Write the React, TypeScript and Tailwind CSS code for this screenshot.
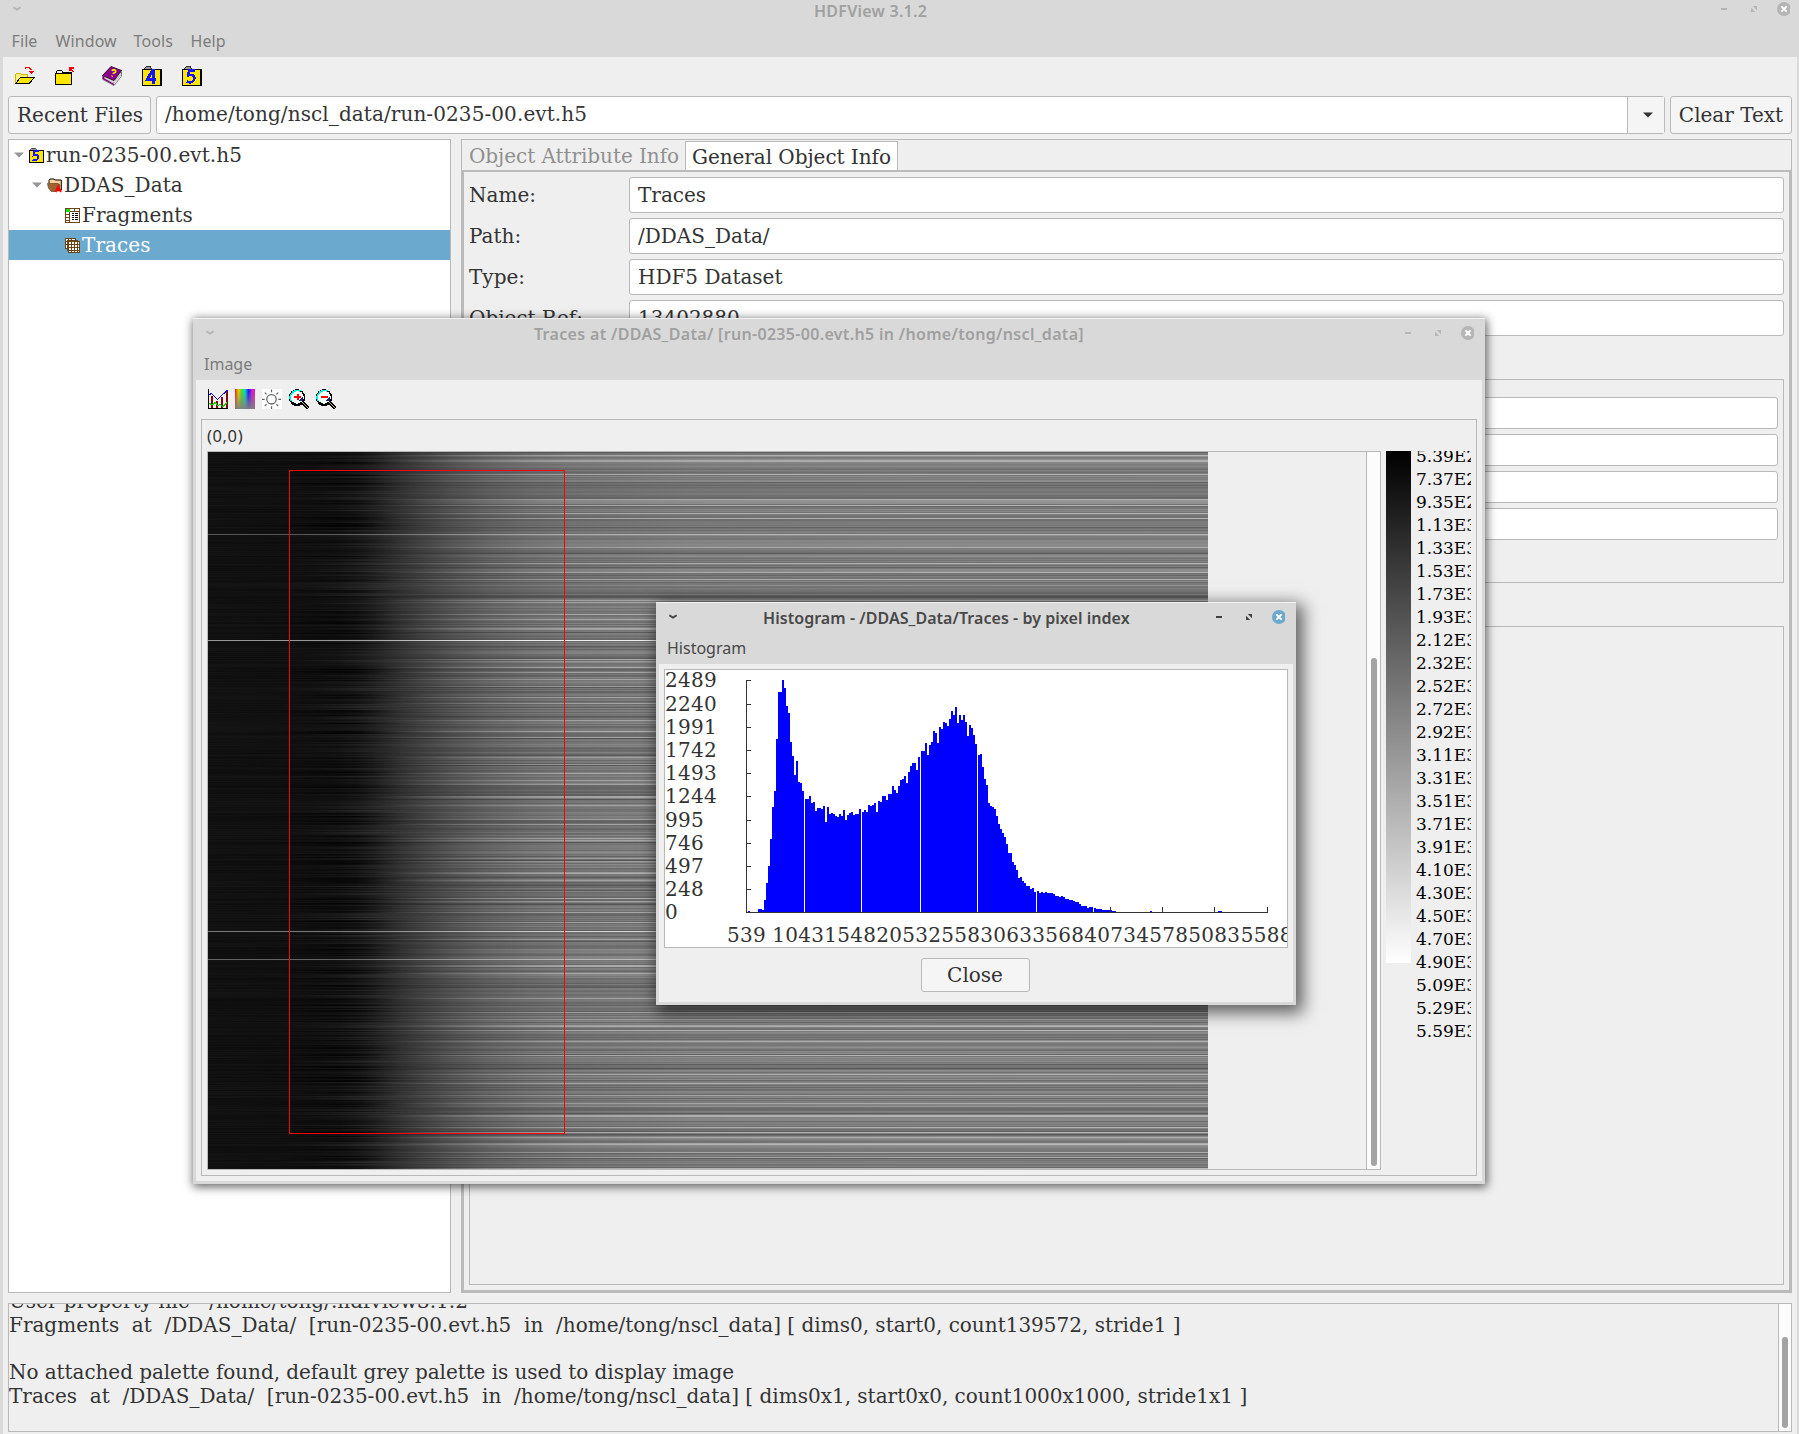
import React from "react";

/* ---------- shared pieces ---------- */

const SERIF = "font-['DejaVu_Serif',serif]";
const SANS = "font-['Noto_Sans',sans-serif]";

function Chevron({ color }: { color: string }) {
  return (
    <svg className="block" width="9" height="6" viewBox="0 0 9 6">
      <path d="M0.3 1.2 L4 3.6 L7.7 1.2" fill="none" stroke={color} strokeWidth="1.9" />
    </svg>
  );
}

function WindowButtons({ color, close }: { color: string; close: string }) {
  return (
    <svg className="block" width="70" height="14" viewBox="0 0 70 14">
      <rect x="1" y="6" width="6" height="2" fill={color} />
      <path d="M32.8 4 H37 V8.2 Z M31 5.8 V10 H35.2 Z" fill={color} />
      <circle cx="64" cy="7" r="7" fill={close} />
      <path d="M61.4 4.4 L66.6 9.6 M66.6 4.4 L61.4 9.6" stroke="#fff" strokeWidth="2" />
    </svg>
  );
}

function Field({ value, h }: { value?: string; h: string }) {
  return (
    <div className={`flex-1 ${h} rounded-[3px] border border-[#b9b9b9] bg-white pl-2 ${SERIF} text-[20px] leading-[35px] text-[#333]`}>
      {value}
    </div>
  );
}

/* ---------- icons ---------- */

function OpenIcon() {
  return (
    <svg width="20" height="20" viewBox="0 0 20 20" shapeRendering="crispEdges">
      <path d="M0.5 18 V8.5 L1.5 7.5 H5.5 L6.5 8.5 H12.5 V11" fill="#fff27a" stroke="#c9b400" />
      <path d="M0.5 17.5 L5.5 11.5 H19.5 L14 17.5 Z" fill="#ffe600" stroke="#000" />
      <path d="M10 2.5 C12 0.5 15 0.5 16.5 4.5" fill="none" stroke="#f00" strokeWidth="1.4" />
      <path d="M13.5 5 H20 L16.8 8 Z" fill="#f00" />
    </svg>
  );
}

function CloseFileIcon() {
  return (
    <svg width="20" height="20" viewBox="0 0 20 20" shapeRendering="crispEdges">
      <path d="M0.5 18.5 V7.5 H1.5 V5.5 L2.5 4.5 H6.5 L7.5 6.5 H16.5 V18.5 Z" fill="#ffe600" stroke="#000" />
      <rect x="2" y="5" width="5" height="2" fill="#efefef" />
      <path d="M1 7.5 H16" stroke="#000" />
      <path d="M14 1 H19 V2.5 H16 V5 H14 Z" fill="#f00" />
      <path d="M15 2 L18.5 5.8" stroke="#f00" strokeWidth="1.5" />
    </svg>
  );
}

function BookIcon() {
  return (
    <svg width="20" height="20" viewBox="0 0 20 20">
      <path d="M1 10 L1 13.5 L12 19.5 L19.5 10 V6 Z" fill="#fff" stroke="#444" strokeWidth="0.7" />
      <path d="M3 12.5 L12 17 L19 8.5 M3 11 L12 15.5 L19 7" stroke="#888" strokeWidth="0.6" fill="none" />
      <path d="M0.5 9.5 L9 0.5 L19.5 4.5 L12 14.5 Z" fill="#8a008a" stroke="#2c002c" strokeWidth="0.9" />
      <path d="M0.5 9.5 V13 L12 19.2 V17.8 L2.5 12.6 V11 Z" fill="#7a007a" />
      <path d="M9.8 4.8 C11 3 14.4 3.8 13.6 5.8 C13 7 11 6.6 11.2 8 M10.5 9.6 L9.7 10.4" fill="none" stroke="#ffee00" strokeWidth="1.7" />
    </svg>
  );
}

function HdfIcon({ digit, size }: { digit: "4" | "5"; size: number }) {
  return (
    <svg width={size} height={size} viewBox="0 0 20 20" shapeRendering="crispEdges">
      <path d="M1 4 L3.5 0.5 H8.5 L10.5 3 V4 Z" fill="#999" stroke="#000" strokeWidth="0.8" />
      <rect x="0.7" y="3.2" width="18.4" height="16.1" fill="#ffe600" stroke="#000" strokeWidth="1.4" />
      {digit === "4" ? (
        <path d="M13.8 13.4 H5.2 L10.6 4.2 H11.4 V17.6" fill="none" stroke="#1414ff" strokeWidth="2.8" />
      ) : (
        <path d="M13.2 4.6 H7.2 L6.2 9.4 C9.4 8.2 12.8 9.4 12.2 13 C11.6 16.4 8 17 4.8 15.6" fill="none" stroke="#1414ff" strokeWidth="2.7" />
      )}
    </svg>
  );
}

function GroupIcon() {
  return (
    <svg width="15" height="15" viewBox="0 0 15 15">
      <path d="M2 5 V2.5 L3 1 H7 L8 2 H14.3 V12 H5" fill="#ffcf9a" stroke="#000" strokeWidth="1" />
      <path d="M0.5 5.5 H11 L13 7 L12 11 L8 13.5 H4.5 L1.5 10 Z" fill="#9c6432" stroke="#6b3f17" strokeWidth="0.7" />
      <path d="M8.6 14 L11.2 8.4 L14 14 M9.8 12.2 H12.8" stroke="#f00" strokeWidth="1.9" fill="none" />
    </svg>
  );
}

function TableIcon() {
  return (
    <svg width="15" height="15" viewBox="0 0 15 15" shapeRendering="crispEdges">
      <rect x="0.5" y="0.5" width="14" height="14" fill="#fff" stroke="#6b4413" />
      <path d="M4.5 0 V15 M9.5 0 V4 M0 3.5 H15 M0 6.5 H5 M0 9.5 H5 M0 12.5 H5" stroke="#6b4413" />
      <rect x="1" y="1" width="4" height="3" fill="#1be01b" />
      <path d="M7 5.5 H9 M10 5.5 H13 M7 7.5 H9 M10 7.5 H13 M7 9.5 H9 M10 9.5 H13 M7 11.5 H9 M10 11.5 H13" stroke="#000" />
    </svg>
  );
}

function ArrayIcon() {
  return (
    <svg width="15" height="15" viewBox="0 0 15 15" shapeRendering="crispEdges">
      <rect x="0.5" y="0.5" width="10" height="10" fill="#fff" stroke="#6b4413" />
      <rect x="2.5" y="2.5" width="10" height="10" fill="#fff" stroke="#6b4413" />
      <path d="M0 3.5 H3 M0 6.5 H3 M3.5 0 V3 M6.5 0 V3" stroke="#6b4413" />
      <rect x="3.5" y="3.5" width="11" height="11" fill="#fff" stroke="#6b4413" />
      <path d="M6.5 4 V15 M9.5 4 V15 M12.5 4 V15 M4 6.5 H15 M4 9.5 H15 M4 12.5 H15" stroke="#6b4413" />
    </svg>
  );
}

function ChartIcon() {
  return (
    <svg width="20" height="20" viewBox="0 0 20 20" shapeRendering="crispEdges">
      <path d="M4 7 V19 M9 12 V19 M14 8 V19 M19 2 V19" stroke="#8b0000" strokeWidth="2" />
      <path d="M0.5 0 V19.5 H20" stroke="#000" fill="none" />
      <path d="M1 6 L3.5 4.5 L9.5 10.5 L19.5 1" stroke="#1010e0" fill="none" />
      <path d="M1 14 L4 16 L7 13.5 L10 17 L12 15 L15 18 L19 13" stroke="#00e000" fill="none" strokeWidth="1.2" />
    </svg>
  );
}

function PaletteIcon() {
  return (
    <svg width="20" height="20" viewBox="0 0 20 20">
      <defs>
        <linearGradient id="hue">
          <stop offset="0" stopColor="#e02020" />
          <stop offset="0.17" stopColor="#f0c800" />
          <stop offset="0.34" stopColor="#40e020" />
          <stop offset="0.5" stopColor="#10d8c8" />
          <stop offset="0.68" stopColor="#1818f0" />
          <stop offset="0.86" stopColor="#d818e0" />
          <stop offset="1" stopColor="#f02080" />
        </linearGradient>
        <linearGradient id="fade" x2="0" y2="1">
          <stop offset="0.1" stopColor="#808080" stopOpacity="0" />
          <stop offset="1" stopColor="#808080" stopOpacity="0.95" />
        </linearGradient>
      </defs>
      <rect width="20" height="20" fill="url(#hue)" />
      <rect width="20" height="20" fill="url(#fade)" />
    </svg>
  );
}

function BrightnessIcon() {
  return (
    <svg width="20" height="20" viewBox="0 0 20 20">
      <rect width="20" height="20" fill="#fdfdfd" />
      <circle cx="9.5" cy="10.3" r="4.7" fill="#fff" stroke="#666" strokeWidth="1.3" />
      <path d="M9.5 0.5 V3.2 M9.5 17.3 V20 M0 10.3 H2.7 M16.3 10.3 H19 M2.8 3.6 L4.6 5.4 M16.2 3.6 L14.4 5.4 M2.8 17 L4.6 15.2 M16.2 17 L14.4 15.2" stroke="#666" strokeWidth="1.2" />
    </svg>
  );
}

function ZoomIcon({ plus }: { plus?: boolean }) {
  return (
    <svg width="20" height="20" viewBox="0 0 20 20" shapeRendering="crispEdges">
      <circle cx="8" cy="8.3" r="7.5" fill="#f4ffff" stroke="#000" strokeWidth="1.4" />
      <path d="M2 12 A7 7 0 0 1 4 3.2 A7 7 0 0 1 11.5 2.2" fill="none" stroke="#00f0f0" strokeWidth="1.7" />
      <path d="M2.4 13.2 C5.5 16.8 10 16.4 13 14" fill="none" stroke="#000" strokeWidth="2.4" />
      <path d="M10.5 11.5 L13.5 8 V12 Z" fill="#20206a" />
      <path d="M13.5 13.5 L19.3 19.3" stroke="#000" strokeWidth="3.2" />
      <path d="M13.5 13.5 L19 19" stroke="#b8b070" strokeWidth="1.4" />
      <path d={plus ? "M5 8 H12 M8.5 4.8 V11.2" : "M5 8 H12"} stroke="#f00" strokeWidth="2" />
    </svg>
  );
}

/* ---------- image data ---------- */

const BRIGHT = [
  3, 8, 9, 22, 47, 53, 61, 66, 82, 95, 111, 120, 127, 148, 150, 162, 167, 176, 177, 207, 209, 215, 220, 227, 234, 245, 251,
  268, 279, 285, 305, 312, 321, 328, 332, 344, 345, 353, 367, 372, 386, 388, 406, 409, 420, 421, 428, 446, 449, 460, 470,
  487, 513, 514, 521, 546, 560, 567, 573, 574, 578, 589, 603, 622, 631, 643, 651, 663, 664, 675, 680, 685, 691, 692, 700,
  705, 716,
];
const DARK = [
  0, 30, 33, 75, 101, 143, 144, 145, 180, 206, 235, 264, 286, 303, 313, 347, 390, 408, 425, 433, 438, 452, 489, 535, 602,
  612, 616, 661, 682, 706,
];
const FULL: Record<number, [number, number]> = { 82: [88, 52], 188: [150, 105], 479: [120, 60], 507: [100, 38] };

function noise(n: number) {
  const s = Math.sin(n * 127.1 + 11.7) * 43758.5453;
  return s - Math.floor(s);
}

const STOPS: [number, number, number, number][] = [
  // x, base level, amplitude share, onset share
  [0, 17, 0, 0],
  [70, 16, 0, 0.1],
  [105, 16, 0, 0.45],
  [130, 18, 0, 0.8],
  [150, 24, 0.02, 1],
  [165, 32, 0.06, 0.85],
  [180, 42, 0.12, 0.55],
  [195, 52, 0.22, 0.3],
  [215, 64, 0.35, 0.12],
  [245, 80, 0.55, 0],
  [280, 95, 0.7, 0],
  [320, 106, 0.85, 0],
  [365, 114, 0.95, 0],
  [480, 121, 1, 0],
  [700, 124, 1.05, 0],
  [1000, 124, 1.1, 0],
];

const ROWS = Array.from({ length: 717 }, (_, y) => {
  let amp = (noise(y) - 0.5) * 34 + (noise(Math.floor(y / 4) + 900) - 0.5) * 18;
  if (BRIGHT.includes(y)) amp = 42 + noise(y + 31) * 16;
  if (DARK.includes(y)) amp = -24 - noise(y + 31) * 10;
  const onset = (noise(y + 5000) - 0.6) * 22 + (noise(Math.floor(y / 6) + 70) - 0.5) * 16;
  const left = (noise(y + 8000) - 0.5) * 7;
  const full = FULL[y];
  return STOPS.map(([x, base, a, o]) => {
    let v = base + a * amp + o * onset + (1 - Math.min(1, a)) * left;
    if (full) v = full[0] + (base - 16) * (a > 0 ? 0.75 : 0.5) + a * full[1] * 0.3;
    v = Math.max(4, Math.min(240, Math.round(v)));
    return { x, c: `rgb(${v},${v},${v})` };
  });
});

function Heatmap() {
  return (
    <svg className="block" width="1000" height="717" viewBox="0 0 1000 717" shapeRendering="crispEdges">
      <defs>
        {ROWS.map((stops, y) => (
          <linearGradient key={y} id={`row${y}`}>
            {stops.map((s) => (
              <stop key={s.x} offset={s.x / 1000} stopColor={s.c} />
            ))}
          </linearGradient>
        ))}
      </defs>
      {ROWS.map((_, y) => (
        <rect key={y} y={y} width="1000" height="1" fill={`url(#row${y})`} />
      ))}
      <rect x="81.5" y="18.5" width="275" height="663" fill="none" stroke="#f00" />
    </svg>
  );
}

/* ---------- histogram data: top edge of each 2px bar, in thirds of a pixel ---------- */

const SEGMENTS: [number, number[]][] = [
  [748, [948, 951, 951, 951, 951, 942, 942, 945, 915, 864, 813, 732, 636, 588, 432, 291, 291, 255, 279, 333, 354, 441, 483, 540, 498, 561, 564, 588]],
  [805, [612, 612, 603, 624, 621, 648, 639, 639, 642, 633, 681, 636, 657, 654, 657, 663, 666, 657, 663, 645, 675, 660, 654, 651, 660, 657, 657, 642]],
  [862, [651, 645, 651, 630, 633, 630, 624, 651, 618, 621, 603, 603, 615, 597, 597, 573, 585, 594, 573, 555, 552, 543, 564, 531, 513, 504, 504, 525, 486]],
  [921, [468, 468, 444, 480, 450, 441, 408, 414, 444, 396, 402, 381, 384, 393, 372, 348, 360, 336, 384, 360, 375, 360, 381, 423, 390, 399, 420, 447]],
  [978, [480, 477, 516, 552, 570, 624, 633, 636, 642, 663, 687, 702, 714, 726, 747, 774, 774, 801, 810, 825, 849, 846, 858, 864, 873, 873, 882, 879, 891]],
  [1037, [888, 894, 891, 894, 891, 894, 894, 894, 897, 903, 903, 906, 903, 906, 912, 912, 915, 915, 918, 921, 921, 927, 933, 933, 933, 939, 936, 936]],
  [1094, [939, 942, 942, 942, 945, 945, 945, 945, 945, 948, 948]],
  [1150, [948]],
  [1218, [948, 948]],
];
const Y_TICKS: [number, string][] = [
  [680, "2489"], [704, "2240"], [727, "1991"], [750, "1742"], [773, "1493"], [796, "1244"],
  [820, "995"], [843, "746"], [866, "497"], [889, "248"], [912, "0"],
];
const X_LABELS: [number, string][] = [
  [727, "539"], [772.3, "1043"], [824.3, "1548"], [876.3, "2053"], [928.3, "2558"], [980.3, "3063"],
  [1032.3, "3568"], [1084.3, "4073"], [1136.3, "4578"], [1188.3, "5083"], [1240.7, "5588"],
];

function Histogram() {
  return (
    <svg className="block" width="622" height="277" viewBox="665 670 622 277">
      <g shapeRendering="crispEdges" fill="#0000ff">
        {SEGMENTS.map(([x0, tops]) =>
          tops.map((t, i) => (
            <rect key={`${x0}-${i}`} x={x0 + i * 2} y={595 + t / 3} width="2" height={317 - t / 3} />
          )),
        )}
      </g>
      <g shapeRendering="crispEdges" fill="#333">
        <rect x="746" y="680" width="1" height="233" />
        <rect x="746" y="912" width="522" height="1" />
        {Y_TICKS.map(([y]) => (
          <rect key={y} x="746" y={y} width="5" height="1" />
        ))}
        {[1110, 1162, 1214, 1267].map((x) => (
          <rect key={x} x={x} y="907" width="1" height="5" />
        ))}
      </g>
      <g className={`${SERIF} text-[20px] tracking-[0.28px]`} fill="#333">
        {Y_TICKS.map(([y, label]) => (
          <text key={label} x="665" y={y + 7}>{label}</text>
        ))}
        {X_LABELS.map(([x, label]) => (
          <text key={label} x={x} y="942">{label}</text>
        ))}
      </g>
    </svg>
  );
}

const SCALE = [
  "5.39E2", "7.37E2", "9.35E2", "1.13E3", "1.33E3", "1.53E3", "1.73E3", "1.93E3", "2.12E3", "2.32E3", "2.52E3", "2.72E3",
  "2.92E3", "3.11E3", "3.31E3", "3.51E3", "3.71E3", "3.91E3", "4.10E3", "4.30E3", "4.50E3", "4.70E3", "4.90E3", "5.09E3",
  "5.29E3", "5.59E3",
];

/* ---------- windows ---------- */

function HistogramWindow() {
  return (
    <div className="absolute left-[656px] top-[602px] flex h-[403px] w-[640px] flex-col border-t border-[#f2f2f2] bg-[#d9d9d9] px-[3px] pb-[3px] shadow-[4px_5px_16px_3px_rgba(0,0,0,0.6)]">
      <div className={`flex h-[61px] flex-col ${SANS} text-[16px] text-[#484848]`}>
        <div className="flex h-[27px] items-center">
          <div className="w-[104px] pl-[10px]"><Chevron color="#484848" /></div>
          <div className="h-[27px] flex-1 whitespace-nowrap font-semibold leading-[30px] tracking-[0.05px]">Histogram - /DDAS_Data/Traces - by pixel index</div>
          <div className="pr-[8px]"><WindowButtons color="#3f3f3f" close="#6ca9cf" /></div>
        </div>
        <div className="pl-2 leading-[36px]">Histogram</div>
      </div>
      <div className="flex flex-1 flex-col items-center bg-[#efefef] pt-[5px]">
        <div className="h-[279px] w-[624px] border border-[#b9b9b9] bg-white"><Histogram /></div>
        <button className={`mr-[2px] mt-[10px] h-[34px] w-[109px] rounded-[3px] border border-[#b9b9b9] bg-[#f5f5f5] ${SERIF} text-[20px] leading-[32px] text-[#333]`}>Close</button>
      </div>
    </div>
  );
}

function TracesWindow() {
  return (
    <div className="absolute left-[193px] top-[318px] flex h-[866px] w-[1292px] flex-col border-t border-[#f2f2f2] bg-[#d9d9d9] px-[3px] pb-[3px] shadow-[1px_2px_9px_1px_rgba(0,0,0,0.6)]">
      <div className={`flex h-[61px] flex-col ${SANS} text-[16px] text-[#7c7c7c]`}>
        <div className="flex h-[27px] items-center">
          <div className="w-[338px] pl-[10px]"><Chevron color="#b5b5b5" /></div>
          <div className="h-[27px] flex-1 whitespace-nowrap font-semibold leading-[30px] tracking-[0.32px] text-[#a0a0a0]">Traces at /DDAS_Data/ [run-0235-00.evt.h5 in /home/tong/nscl_data]</div>
          <div className="pr-[8px]"><WindowButtons color="#b5b5b5" close="#b5b5b5" /></div>
        </div>
        <div className="pl-2 leading-[36px]">Image</div>
      </div>
      <div className="flex flex-1 flex-col bg-[#efefef] px-[5px] pb-[5px]">
        <div className="flex h-[39px] gap-[7px] pl-[7px] pt-[9px]">
          <ChartIcon />
          <PaletteIcon />
          <BrightnessIcon />
          <ZoomIcon plus />
          <ZoomIcon />
        </div>
        <div className="flex flex-1 flex-col border border-[#b9b9b9] px-[5px] pb-[5px]">
          <div className={`h-[31px] ${SANS} text-[16.5px] leading-[32px] tracking-[0.6px] text-[#333]`}>(0,0)</div>
          <div className="flex flex-1">
            <div className="flex h-[719px] w-[1174px] border border-[#b9b9b9]">
              <Heatmap />
              <div className="flex-1" />
              <div className="flex w-[14px] items-end border-l border-[#b9b9b9] bg-[#fcfcfc] pb-[3px] pl-[4px]">
                <div className="h-[508px] w-[6px] rounded-full bg-[#a3a3a3]" />
              </div>
            </div>
            <div className="ml-[5px] h-[512px] w-[25px] bg-[linear-gradient(to_bottom,#000,#fff)]" />
            <div className={`ml-[5px] h-[719px] w-[55px] overflow-hidden whitespace-nowrap ${SERIF} text-[17px] text-black`}>
              {SCALE.map((s, i) => (
                <div key={s} className={`h-[23px] leading-[23px] ${i === 0 ? "-mt-[6px]" : ""}`}>{s}</div>
              ))}
            </div>
          </div>
        </div>
      </div>
    </div>
  );
}

function TreeRow({ pad, icon, label, open, selected }: { pad: string; icon: React.ReactNode; label: string; open?: boolean; selected?: boolean }) {
  return (
    <div className={`flex h-[30px] items-center ${pad} ${selected ? "bg-[#6ca9cf] text-white" : ""}`}>
      {open && (
        <svg className="mr-[5px]" width="10" height="6" viewBox="0 0 10 6"><path d="M0 0.5 H10 L5 5.5 Z" fill="#959595" /></svg>
      )}
      {icon}
      <span className="ml-[2px] leading-[30px] tracking-[0.07px]">{label}</span>
    </div>
  );
}

const GENERAL: [string, string][] = [
  ["Name:", "Traces"],
  ["Path:", "/DDAS_Data/"],
  ["Type:", "HDF5 Dataset"],
  ["Object Ref:", "13402880"],
];

export default function App() {
  return (
    <div className={`relative flex h-[1434px] w-[1799px] flex-col overflow-hidden bg-[#d9d9d9] ${SERIF} text-[20px] text-[#333]`}>
      {/* title and menu bar */}
      <header className={`flex h-[57px] flex-col ${SANS} text-[16px] text-[#7c7c7c]`}>
        <div className="flex h-[18px] items-center">
          <div className="w-[814px] pl-[13px]"><Chevron color="#b5b5b5" /></div>
          <div className="h-[18px] flex-1 font-semibold leading-[22px] tracking-[0.25px] text-[#a0a0a0]">HDFView 3.1.2</div>
          <div className="pr-[9px]"><WindowButtons color="#b5b5b5" close="#b5b5b5" /></div>
        </div>
        <div className="flex h-[39px] leading-[47px] tracking-[0.1px]">
          <span className="w-[44.5px] pl-[11.5px]">File</span>
          <span className="w-[78px] pl-[11px]">Window</span>
          <span className="w-[57px] pl-[11px]">Tools</span>
          <span className="pl-[11px]">Help</span>
        </div>
      </header>

      <div className="ml-[3px] mr-[2px] flex flex-1 flex-col bg-[#efefef] pl-[5px] pr-[5px]">
        {/* toolbar */}
        <div className="flex h-[39px] pl-[7px] pt-[9px]">
          <div className="w-[40px]"><OpenIcon /></div>
          <div className="w-[47px]"><CloseFileIcon /></div>
          <div className="w-[40px]"><BookIcon /></div>
          <div className="w-[40px]"><HdfIcon digit="4" size={20} /></div>
          <HdfIcon digit="5" size={20} />
        </div>

        {/* file path row */}
        <div className="flex h-[38px]">
          <div className="w-[143px] rounded-[3px] border border-[#b9b9b9] bg-[#f5f5f5] pl-px text-center leading-[36px]">Recent Files</div>
          <div className="ml-[5px] flex flex-1 rounded-[3px] border border-[#b9b9b9] bg-white">
            <div className="flex-1 pl-2 leading-[34px] tracking-[0.09px]">/home/tong/nscl_data/run-0235-00.evt.h5</div>
            <div className="flex w-[37px] items-center justify-center border-l border-[#b9b9b9] bg-[#f5f5f5] pl-[3px]">
              <svg width="10" height="6" viewBox="0 0 10 6"><path d="M0 0.5 H10 L5 5.5 Z" fill="#333" /></svg>
            </div>
          </div>
          <div className="ml-[5px] w-[122px] rounded-[3px] border border-[#b9b9b9] bg-[#f5f5f5] text-center leading-[36px]">Clear Text</div>
        </div>

        <div className="mt-[5px] flex h-[1154px]">
          {/* object tree */}
          <div className="w-[443px] border border-[#b9b9b9] bg-white">
            <TreeRow pad="pl-[5px]" icon={<HdfIcon digit="5" size={15} />} label="run-0235-00.evt.h5" open />
            <TreeRow pad="pl-[23px]" icon={<GroupIcon />} label="DDAS_Data" open />
            <TreeRow pad="pl-[56px]" icon={<TableIcon />} label="Fragments" />
            <TreeRow pad="pl-[56px]" icon={<ArrayIcon />} label="Traces" selected />
          </div>

          {/* object details */}
          <div className="ml-[10px] flex flex-1 flex-col">
            <div className="flex h-[31px] items-end border-x border-t border-[#b9b9b9]">
              <div className="w-[223px] pl-[7px] leading-[28px] tracking-[-0.05px] text-[#8f8f8f]">Object Attribute Info</div>
              <div className="relative h-[29px] w-[213px] border border-b-0 border-[#b9b9b9] bg-white pl-[6px] leading-[30px] tracking-[-0.05px]">General Object Info</div>
            </div>
            <div className="flex flex-1 flex-col border-x-[3px] border-b-[3px] border-t-2 border-[#bbb] px-[5px] pb-[5px] pt-[5px]">
              <div className="flex flex-col gap-[5px]">
                {GENERAL.map(([k, v]) => (
                  <div key={k} className="flex">
                    <div className="w-[160px] leading-[36px]">{k}</div>
                    <Field value={v} h="h-[36px]" />
                  </div>
                ))}
              </div>
              <div className="mt-[43px] flex h-[204px] flex-col gap-[5px] border border-[#b9b9b9] pl-[160px] pr-[5px] pt-[17px]">
                {[0, 1, 2, 3].map((i) => (
                  <div key={i} className="flex"><Field h="h-[32px]" /></div>
                ))}
              </div>
              <div className="mt-[43px] flex-1 border border-[#b9b9b9]" />
            </div>
          </div>
        </div>

        {/* log */}
        <div className="mt-[10px] flex h-[129px] border border-[#b9b9b9]">
          <div className="flex-1 overflow-hidden whitespace-pre leading-[24px]">
            <div className="-mt-[15px] h-[24px]">User property file - /home/tong/.hdfview3.1.2</div>
            <div className="h-[24px]">Fragments  at  /DDAS_Data/  [run-0235-00.evt.h5  in  /home/tong/nscl_data] [ dims0, start0, count139572, stride1 ]</div>
            <div className="h-[23px]" />
            <div className="h-[24px] tracking-[-0.06px]">No attached palette found, default grey palette is used to display image</div>
            <div className="h-[24px]">Traces  at  /DDAS_Data/  [run-0235-00.evt.h5  in  /home/tong/nscl_data] [ dims0x1, start0x0, count1000x1000, stride1x1 ]</div>
          </div>
          <div className="flex w-[13px] items-end border-l border-[#b9b9b9] bg-[#fcfcfc] pb-[3px] pl-[3px]">
            <div className="h-[91px] w-[6px] rounded-full bg-[#a3a3a3]" />
          </div>
        </div>
      </div>

      <TracesWindow />
      <HistogramWindow />
    </div>
  );
}
